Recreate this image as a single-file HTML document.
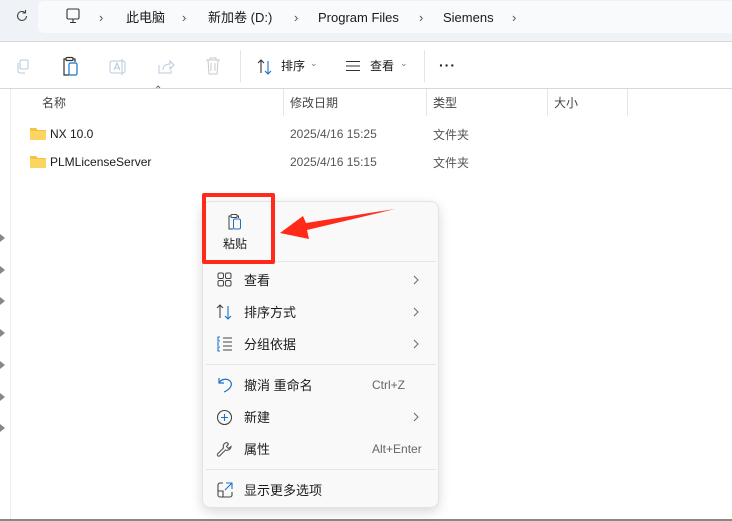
<!DOCTYPE html>
<html><head><meta charset="utf-8"><style>
*{margin:0;padding:0;box-sizing:border-box}
body{width:732px;height:521px;overflow:hidden;background:#fff;font-family:"Liberation Sans","Noto Sans CJK SC",sans-serif;font-size:12px;color:#1a1a1a;position:relative}
.a{position:absolute;white-space:nowrap}
.sep{position:absolute;height:1px;background:#e5e5e5}
</style></head><body>
<div class="a" style="left:0;top:0;width:732px;height:41px;background:#eff3f7"></div>
<div class="a" style="left:38px;top:1px;width:694px;height:32px;background:#f8fafc;border-radius:6px 0 0 6px"></div>
<div class="a" style="left:0;top:41px;width:732px;height:1px;background:#d8d8d8"></div>
<svg class="a" style="left:14px;top:8px" width="16" height="16" viewBox="0 0 16 16" fill="none" stroke="#444" stroke-width="1.1"><path d="M12.5 8a4.5 4.5 0 1 1-1.4-3.3M11.5 2v3h-3"/></svg>
<svg class="a" style="left:64px;top:7px" width="18" height="18" viewBox="0 0 18 18" fill="none" stroke="#333" stroke-width="1.1"><rect x="3" y="2" width="12" height="10" rx="1.5"/><path d="M9 12v3M6 15.5h6"/></svg>
<div class="a" style="left:99px;top:10px;font-size:13px;color:#555">›</div>
<div class="a" style="left:126px;top:7px;font-size:13px">此电脑</div>
<div class="a" style="left:182px;top:10px;font-size:13px;color:#555">›</div>
<div class="a" style="left:208px;top:7px;font-size:13px">新加卷 (D:)</div>
<div class="a" style="left:294px;top:10px;font-size:13px;color:#555">›</div>
<div class="a" style="left:318px;top:10px;font-size:13px">Program Files</div>
<div class="a" style="left:419px;top:10px;font-size:13px;color:#555">›</div>
<div class="a" style="left:443px;top:10px;font-size:13px">Siemens</div>
<div class="a" style="left:512px;top:10px;font-size:13px;color:#555">›</div>
<!-- toolbar -->
<svg class="a" style="left:14px;top:58px" width="18" height="18" viewBox="0 0 18 18" fill="none" stroke="#b8c8dc" stroke-width="1"><rect x="6" y="2" width="8" height="9" rx="1.5"/><path d="M4 5v8a2 2 0 0 0 2 2h5"/></svg>
<svg class="a" style="left:61px;top:56px" width="18" height="22" viewBox="0 0 18 22" fill="none" stroke-width="1.2"><path d="M5 3H3v16h5" stroke="#333"/><path d="M12 3h2v3" stroke="#333"/><rect x="5" y="1.5" width="7" height="3" rx="1" stroke="#333"/><rect x="8" y="7" width="8" height="12" rx="1.5" stroke="#1a73c8"/></svg>
<svg class="a" style="left:108px;top:57px" width="20" height="20" viewBox="0 0 20 20" fill="none" stroke="#b8c8dc" stroke-width="1"><rect x="2" y="4" width="15" height="12" rx="2"/><path d="M6 13l3-7 3 7M7 11h4M14 2v16"/></svg>
<svg class="a" style="left:156px;top:57px" width="20" height="20" viewBox="0 0 20 20" fill="none" stroke="#b8c8dc" stroke-width="1"><path d="M3 8v8h12v-3M7 13c0-4 3-6 7-6V4l4 4-4 4V9"/></svg>
<svg class="a" style="left:204px;top:56px" width="18" height="20" viewBox="0 0 18 20" fill="none" stroke="#c8c8c8" stroke-width="1"><path d="M2 4h14M6 4V2h6v2M4 4l1 14h8l1-14M7 7v8M11 7v8"/></svg>
<div class="a" style="left:240px;top:50px;width:1px;height:32px;background:#e5e5e5"></div>
<svg class="a" style="left:256px;top:58px" width="18" height="18" viewBox="0 0 18 18" fill="none" stroke-width="1.1"><path d="M5 15V2M2 5l3-3 3 3" stroke="#333"/><path d="M12 3v13M9 13l3 3 3-3" stroke="#1a73c8"/></svg>
<div class="a" style="left:281px;top:57px;font-size:12px">排序</div>
<div class="a" style="left:310px;top:58px;font-size:9px;color:#777">⌄</div>
<svg class="a" style="left:345px;top:60px" width="16" height="12" viewBox="0 0 16 12" stroke="#333" stroke-width="1.1"><path d="M1 1.5h14M1 6h14M1 10.5h14"/></svg>
<div class="a" style="left:370px;top:57px;font-size:12px">查看</div>
<div class="a" style="left:400px;top:58px;font-size:9px;color:#777">⌄</div>
<div class="a" style="left:424px;top:50px;width:1px;height:32px;background:#e5e5e5"></div>
<div class="a" style="left:439px;top:57px;font-size:14px;font-weight:bold;letter-spacing:1px">···</div>
<div class="a" style="left:0;top:88px;width:732px;height:1px;background:#d8d8d8"></div>
<div class="a" style="left:10px;top:89px;width:1px;height:430px;background:#eee"></div>
<div class="a" style="left:0;top:519px;width:732px;height:2px;background:#888"></div>
<!-- headers -->
<div class="a" style="left:154px;top:85px;font-size:10px;color:#555">⌃</div>
<div class="a" style="left:42px;top:94px;color:#444">名称</div>
<div class="a" style="left:283px;top:89px;width:1px;height:27px;background:#e5e5e5"></div>
<div class="a" style="left:290px;top:94px;color:#444">修改日期</div>
<div class="a" style="left:426px;top:89px;width:1px;height:27px;background:#e5e5e5"></div>
<div class="a" style="left:433px;top:94px;color:#444">类型</div>
<div class="a" style="left:547px;top:89px;width:1px;height:27px;background:#e5e5e5"></div>
<div class="a" style="left:554px;top:94px;color:#444">大小</div>
<div class="a" style="left:627px;top:89px;width:1px;height:27px;background:#e5e5e5"></div>
<!-- rows -->
<svg class="a" style="left:29px;top:126px" width="18" height="15" viewBox="0 0 18 15"><path d="M1 2h6l2 2h8v10H1z" fill="#f5c242"/><path d="M1 5h16v9H1z" fill="#fcd462"/></svg>
<div class="a" style="left:50px;top:127px">NX 10.0</div>
<div class="a" style="left:290px;top:127px;color:#555">2025/4/16 15:25</div>
<div class="a" style="left:433px;top:126px;color:#555">文件夹</div>
<svg class="a" style="left:29px;top:154px" width="18" height="15" viewBox="0 0 18 15"><path d="M1 2h6l2 2h8v10H1z" fill="#f5c242"/><path d="M1 5h16v9H1z" fill="#fcd462"/></svg>
<div class="a" style="left:50px;top:155px">PLMLicenseServer</div>
<div class="a" style="left:290px;top:155px;color:#555">2025/4/16 15:15</div>
<div class="a" style="left:433px;top:154px;color:#555">文件夹</div>
<!-- tree arrows -->
<svg class="a" style="left:0;top:233px" width="6" height="200" fill="#808890"><path d="M0 1l5 4-5 4zM0 33l5 4-5 4zM0 64l5 4-5 4zM0 96l5 4-5 4zM0 128l5 4-5 4zM0 160l5 4-5 4zM0 191l5 4-5 4z"/></svg>
<!-- menu -->
<div class="a" style="left:202px;top:201px;width:237px;height:307px;background:#f9f9f9;border:1px solid #e3e3e3;border-radius:8px;box-shadow:0 4px 12px rgba(0,0,0,.15)"></div>
<svg class="a" style="left:227px;top:213px" width="16" height="18" viewBox="0 0 16 18" fill="none" stroke-width="1"><path d="M4 3H2v13h4M10 3h1.5v2" stroke="#444"/><rect x="4" y="1.5" width="6" height="3" rx="1" stroke="#444"/><rect x="6.5" y="6" width="7" height="10" rx="1.5" stroke="#1a73c8"/></svg>
<div class="a" style="left:223px;top:235px;font-size:12px">粘贴</div>
<div class="sep" style="left:206px;top:261px;width:230px"></div>
<svg class="a" style="left:217px;top:272px" width="15" height="15" viewBox="0 0 15 15" fill="none" stroke="#444" stroke-width="1"><rect x="1" y="1" width="5.5" height="5.5" rx="1.5"/><rect x="8.5" y="1" width="5.5" height="5.5" rx="1.5"/><rect x="1" y="8.5" width="5.5" height="5.5" rx="1.5"/><rect x="8.5" y="8.5" width="5.5" height="5.5" rx="1.5"/></svg>
<div class="a" style="left:244px;top:270px;font-size:13px">查看</div>
<svg class="a" style="left:413px;top:275px" width="6" height="10" viewBox="0 0 6 10" fill="none" stroke="#666"><path d="M1 1l4 4-4 4"/></svg>
<svg class="a" style="left:216px;top:304px" width="17" height="16" viewBox="0 0 17 16" fill="none" stroke-width="1.1"><path d="M4 14V1M1 4l3-3 3 3" stroke="#444"/><path d="M12 2v13M9 12l3 3 3-3" stroke="#1a73c8"/></svg>
<div class="a" style="left:244px;top:302px;font-size:13px">排序方式</div>
<svg class="a" style="left:413px;top:307px" width="6" height="10" viewBox="0 0 6 10" fill="none" stroke="#666"><path d="M1 1l4 4-4 4"/></svg>
<svg class="a" style="left:217px;top:336px" width="16" height="16" viewBox="0 0 16 16" fill="none" stroke-width="1.1"><path d="M3 1H1v4h2M3 11H1v4h2M1 6v4" stroke="#1a73c8"/><path d="M6 2h9M6 6h9M6 10h9M6 14h9" stroke="#444"/></svg>
<div class="a" style="left:244px;top:334px;font-size:13px">分组依据</div>
<svg class="a" style="left:413px;top:339px" width="6" height="10" viewBox="0 0 6 10" fill="none" stroke="#666"><path d="M1 1l4 4-4 4"/></svg>
<div class="sep" style="left:206px;top:364px;width:230px"></div>
<svg class="a" style="left:217px;top:376px" width="16" height="17" viewBox="0 0 16 17" fill="none" stroke="#1a73c8" stroke-width="1.2"><path d="M2 2v5h5M2 7c2-4 8-5 11-2s1 8-6 11"/></svg>
<div class="a" style="left:244px;top:375px;font-size:13px">撤消 重命名</div>
<div class="a" style="left:372px;top:378px;font-size:12px;color:#666">Ctrl+Z</div>
<svg class="a" style="left:216px;top:409px" width="17" height="17" viewBox="0 0 17 17" fill="none" stroke-width="1.1"><circle cx="8.5" cy="8.5" r="7" stroke="#444"/><path d="M8.5 5v7M5 8.5h7" stroke="#1a73c8"/></svg>
<div class="a" style="left:244px;top:407px;font-size:13px">新建</div>
<svg class="a" style="left:413px;top:412px" width="6" height="10" viewBox="0 0 6 10" fill="none" stroke="#666"><path d="M1 1l4 4-4 4"/></svg>
<svg class="a" style="left:216px;top:441px" width="17" height="17" viewBox="0 0 17 17" fill="none" stroke="#555" stroke-width="1.1"><path d="M11 1.5a4 4 0 0 0-3.5 5.5L1.5 13a1.5 1.5 0 0 0 2 2l6-6a4 4 0 0 0 5.5-3.5l-2.5 2-2-2 2-2.5z"/></svg>
<div class="a" style="left:244px;top:439px;font-size:13px">属性</div>
<div class="a" style="left:372px;top:442px;font-size:12px;color:#666">Alt+Enter</div>
<div class="sep" style="left:206px;top:469px;width:230px"></div>
<svg class="a" style="left:217px;top:482px" width="16" height="16" viewBox="0 0 16 16" fill="none" stroke-width="1.1"><path d="M6 1H3a2 2 0 0 0-2 2v10a2 2 0 0 0 2 2h10a2 2 0 0 0 2-2v-3M1 9h5v6" stroke="#444"/><path d="M9 1h6v6M15 1L8 8" stroke="#1a73c8"/></svg>
<div class="a" style="left:244px;top:480px;font-size:13px">显示更多选项</div>
<!-- annotation -->
<div class="a" style="left:202px;top:193px;width:73px;height:71px;border:4px solid #ff2a1a;border-radius:2px"></div>
<svg class="a" style="left:270px;top:200px" width="135" height="45" viewBox="270 200 135 45"><path d="M395 209L306 223L303 216L280 233L309 239L307 230Z" fill="#ff2a1a"/></svg>
</body></html>
